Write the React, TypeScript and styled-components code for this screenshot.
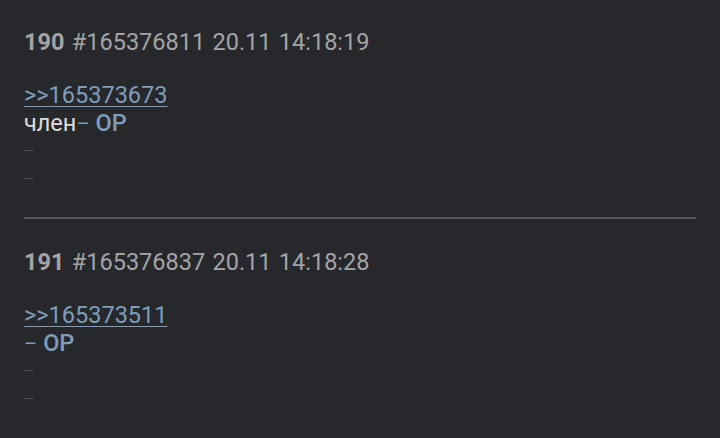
import React from 'react';
import styled, { createGlobalStyle } from 'styled-components';

const GlobalStyle = createGlobalStyle`
  html, body {
    margin: 0;
    padding: 0;
    background: #27282c;
  }
  body {
    font-family: Roboto, "Noto Sans", sans-serif;
  }
`

const Page = styled.div`
  width: 720px;
  min-height: 438px;
  background: #27282c;
  padding: 0 24px;
  box-sizing: border-box;
`

const PostContainer = styled.div<{ $first?: boolean }>`
  padding: ${(p) => (p.$first ? '28px' : '29px')} 0 24px;
`

const PostHeader = styled.div`
  font-size: 23.5px;
  line-height: 28px;
  color: #a4a4a6;
  white-space: pre;
  word-spacing: 1.5px;
  margin-bottom: 25px;
`

const PostNum = styled.span`
  font-weight: 700;
`

const Line = styled.div`
  font-size: 23.5px;
  line-height: 28px;
  height: 28px;
  color: #dcdcdc;
  white-space: nowrap;
`

const ReplyLink = styled.a`
  color: #7d9dbb;
  text-decoration: underline;
  text-underline-offset: 3px;
  text-decoration-thickness: 1px;
`

const Op = styled.span`
  color: #7d9dbb;
  font-weight: 500;
`

const Dash = styled.span`
  color: #7d9dbb;
  font-size: 20px;
  line-height: 1;
  margin-right: 6px;
`

const Spacer = styled.div`
  height: 28px;
  font-size: 13px;
  line-height: 28px;
  color: #4e4f53;
`

const Divider = styled.div`
  height: 2px;
  background: #55565a;
`

interface IPost {
  num: number;
  id: string;
  date: string;
  reply: string;
  text?: string;
  first?: boolean;
}

const Post: React.FC<IPost> = (props) => {
  return (
    <PostContainer $first={props.first}>
      <PostHeader>
        <PostNum>{props.num}</PostNum> #{props.id} {props.date}
      </PostHeader>
      <Line>
        <ReplyLink>&gt;&gt;{props.reply}</ReplyLink>
      </Line>
      <Line>
        {props.text}<Dash>–</Dash><Op>OP</Op>
      </Line>
      <Spacer>—</Spacer>
      <Spacer>—</Spacer>
    </PostContainer>
  )
}

export default function App() {
  return (
    <Page>
      <GlobalStyle />
      <Post first num={190} id="165376811" date="20.11 14:18:19" reply="165373673" text="член" />
      <Divider />
      <Post num={191} id="165376837" date="20.11 14:18:28" reply="165373511" />
    </Page>
  )
}
